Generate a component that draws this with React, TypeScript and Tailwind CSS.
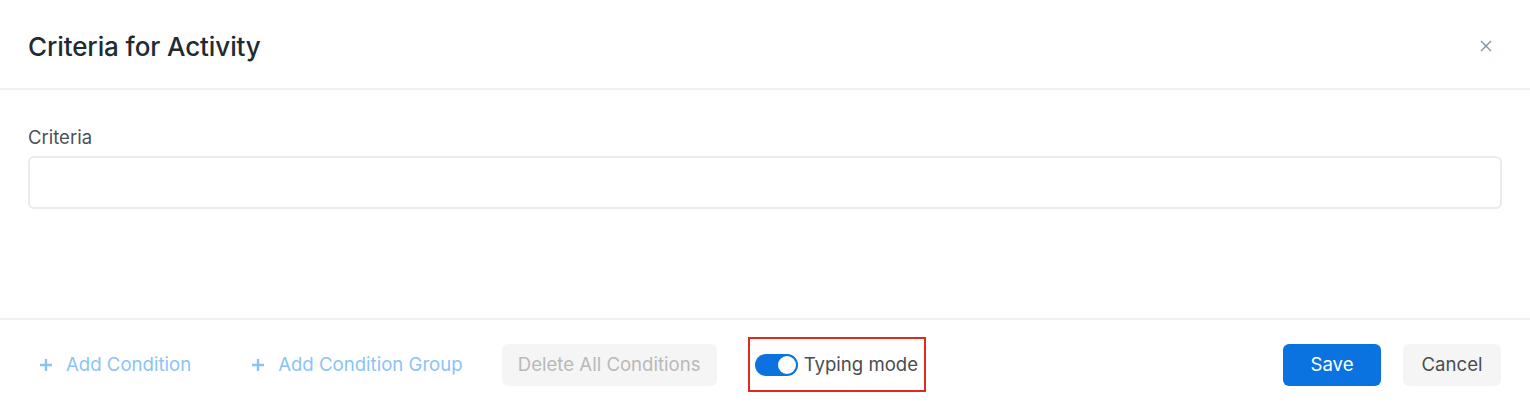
export default function App() {
  return (
    <div className="w-[1530px] h-[402px] bg-white flex flex-col font-['Inter','Liberation_Sans',sans-serif]">
      {/* Header */}
      <div className="h-[90px] shrink-0 flex items-center justify-between pl-7 pr-[38px] pt-[4px] border-b-2 border-[#eef1f4]">
        <h1 className="text-[26px] font-medium text-[#1f2b33] tracking-[-0.1px]">Criteria for Activity</h1>
        <button className="text-[#7d939f]">
          <svg width="12" height="12" viewBox="0 0 12 12" fill="none" stroke="currentColor" strokeWidth="1.4">
            <path d="M1 1L11 11M11 1L1 11" />
          </svg>
        </button>
      </div>

      {/* Body */}
      <div className="h-[228px] shrink-0 px-7 pt-[34px]">
        <label className="block text-[18.5px] leading-[26px] text-[#4b4f54]">Criteria</label>
        <div className="mt-[6px] h-[53px] rounded-[6px] border-2 border-[#e6ecf0]" />
      </div>

      {/* Footer */}
      <div className="flex-1 border-t-2 border-[#eef1f4] flex items-center pl-7 pr-[29px] pt-[7px]">
        <button className="flex items-center h-[42px] px-3 text-[18.6px] text-[#8cc3f7]">
          <svg width="12" height="12" viewBox="0 0 12 12" fill="none" stroke="currentColor" strokeWidth="2.4">
            <path d="M6 0V12M0 6H12" />
          </svg>
          <span className="ml-[14px]">Add Condition</span>
        </button>
        <button className="ml-[37px] flex items-center h-[42px] px-3 text-[18.6px] text-[#8cc3f7]">
          <svg width="12" height="12" viewBox="0 0 12 12" fill="none" stroke="currentColor" strokeWidth="2.4">
            <path d="M6 0V12M0 6H12" />
          </svg>
          <span className="ml-[14px]">Add Condition Group</span>
        </button>
        <button className="ml-[27px] h-[42px] w-[215px] rounded-[6px] bg-[#f5f5f5] text-[18.6px] text-[#b9b9b9]">
          Delete All Conditions
        </button>
        <div className="ml-[31px] h-[55px] w-[178px] border-2 border-[#e02a1b] flex items-center pl-[5px]">
          <div className="w-[43px] h-[22px] rounded-full bg-[#0b72e0] flex items-center justify-end pr-[2px]">
            <div className="w-[18px] h-[18px] rounded-full bg-white" />
          </div>
          <span className="ml-[6px] text-[18.6px] text-[#4a4d51]">Typing mode</span>
        </div>
        <div className="ml-auto flex items-center gap-[22px]">
          <button className="h-[42px] w-[98px] rounded-[6px] bg-[#0b73e0] text-white text-[18.6px]">Save</button>
          <button className="h-[42px] w-[98px] rounded-[6px] bg-[#f5f5f5] text-[#4a4d51] text-[18.6px]">Cancel</button>
        </div>
      </div>
    </div>
  )
}
